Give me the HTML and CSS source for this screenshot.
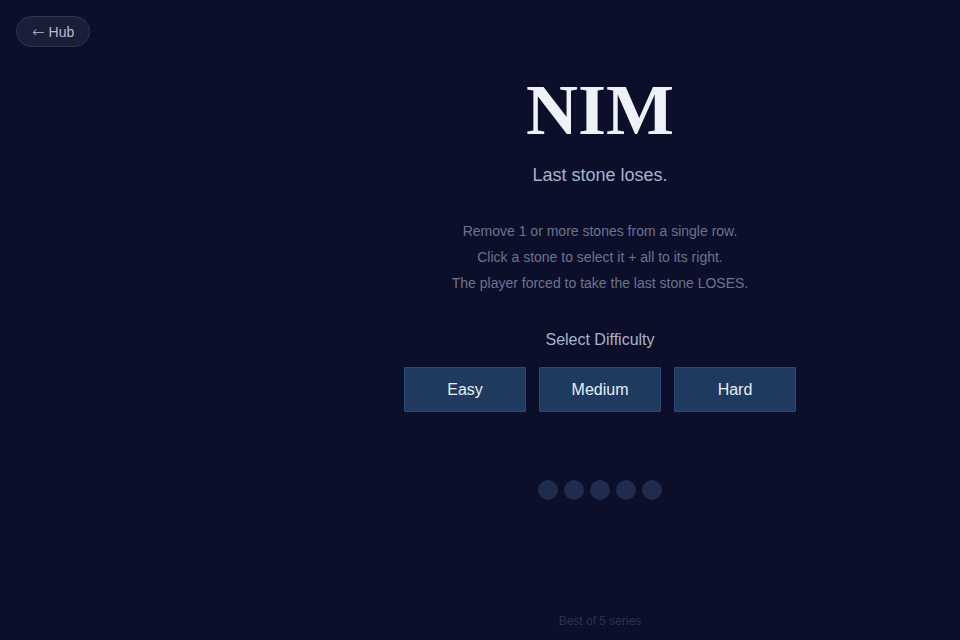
FILE: index.html
```html
<!DOCTYPE html>
<html lang="en">

<head>
  <meta charset="UTF-8" />
  <meta name="viewport" content="width=device-width, initial-scale=1.0" />
  <title>Nim</title>
  <link rel="stylesheet" href="styles.css">
</head>

<body>
  <a class="hub" href="#"><span class="arrow">←</span> Hub</a>
  <div class="layout">
    <aside class="side"></aside>
    <main class="game">
      <h1 class="title">NIM</h1>
      <p class="tagline">Last stone loses.</p>
      <div class="rules">
        <p>Remove 1 or more stones from a single row.</p>
        <p>Click a stone to select it + all to its right.</p>
        <p>The player forced to take the last stone LOSES.</p>
      </div>
      <p class="label">Select Difficulty</p>
      <div class="levels">
        <button class="level">Easy</button>
        <button class="level">Medium</button>
        <button class="level">Hard</button>
      </div>
      <div class="series" id="series"></div>
      <p class="foot">Best of 5 series</p>
    </main>
  </div>
  <script>
    let dots = "";
    for (let i = 0; i < 5; i++) {
      dots += `<span class="dot"></span>`;
    }
    document.getElementById("series").innerHTML = dots;
  </script>
</body>

</html>
```

FILE: styles.css
```css
:root {
  --bg: #0b0f29;
  --text: #a9b3cb;
  --muted: #6b7490;
  --btn: #1e3a5f;
  --btn-border: #2b4b73;
  --dot: #1f2c4d;
}

html,
body {
  margin: 0;
  padding: 0;
}

body {
  background-color: var(--bg);
  font-family: "Liberation Sans", Arial, sans-serif;
  color: var(--text);
  height: 640px;
  overflow: hidden;
}

.hub {
  position: absolute;
  top: 16px;
  left: 16px;
  height: 31px;
  box-sizing: border-box;
  padding: 0 15px;
  display: flex;
  align-items: center;
  gap: 4px;
  border: 1px solid #2f3450;
  border-radius: 16px;
  background-color: #1a1e36;
  color: #b4bcd3;
  font-size: 14px;
  text-decoration: none;
}

.hub .arrow {
  font-family: "DejaVu Sans", sans-serif;
  font-size: 15px;
  font-weight: 300;
}

.layout {
  display: grid;
  grid-template-columns: 240px 1fr;
  height: 640px;
}

.game {
  display: flex;
  flex-direction: column;
  align-items: center;
  padding-top: 72px;
}

.game p {
  margin: 0;
}

.title {
  margin: 0;
  font-family: "Liberation Serif", "Times New Roman", serif;
  font-size: 72px;
  line-height: 76px;
  font-weight: 700;
  color: #eef2f8;
}

.tagline {
  margin-top: 16px !important;
  font-size: 18px;
  line-height: 22px;
}

.rules {
  margin-top: 32px;
  text-align: center;
  font-size: 14px;
  line-height: 26px;
  color: var(--muted);
}

.label {
  margin-top: 33px !important;
  font-size: 16px;
  line-height: 22px;
}

.levels {
  display: flex;
  gap: 13px;
  margin-top: 16px;
}

.level {
  width: 122px;
  height: 45px;
  background-color: var(--btn);
  border: 1px solid var(--btn-border);
  border-radius: 1px;
  color: #e9eef7;
  font-family: inherit;
  font-size: 16px;
  cursor: pointer;
}

.series {
  display: flex;
  gap: 6px;
  margin-top: 68px;
}

.dot {
  width: 20px;
  height: 20px;
  border-radius: 50%;
  background-color: var(--dot);
}

.foot {
  margin-top: auto !important;
  margin-bottom: 12px !important;
  font-size: 12px;
  color: #2a3352;
}
```
